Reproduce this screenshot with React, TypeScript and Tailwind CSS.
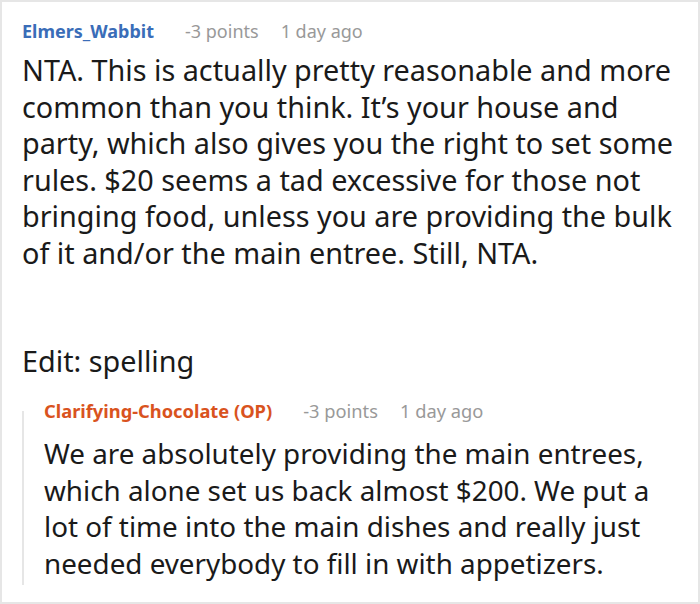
import React from "react";

export default function App() {
  return (
    <div
      className="w-[700px] h-[604px] bg-white border-2 border-[#e6e6e6] overflow-hidden"
      style={{ fontFamily: '"Noto Sans", "Open Sans", sans-serif' }}
    >
      <div className="pl-[20px] pt-[17px]">
        <div className="flex items-center h-[24px] text-[18px] leading-[24px] whitespace-nowrap">
          <span className="font-bold text-[#3a6db8]">Elmers_Wabbit</span>
          <span className="ml-[31px] text-[#999999]">-3 points</span>
          <span className="ml-[22px] text-[#999999]">1 day ago</span>
        </div>
        <div className="text-[28.8px] leading-[36.5px] text-[#1a1a1a] mt-[9px] whitespace-nowrap">
          <p>
            NTA. This is actually pretty reasonable and more
            <br />
            common than you think. It’s your house and
            <br />
            party, which also gives you the right to set some
            <br />
            rules. $20 seems a tad excessive for those not
            <br />
            bringing food, unless you are providing the bulk
            <br />
            of it and/or the main entree. Still, NTA.
          </p>
          <p className="mt-[71.5px]">Edit: spelling</p>
        </div>
        <div className="flex mt-[20px]">
          <div className="w-[2px] bg-[#e6e6e6] mt-[12px]" />
          <div className="pl-[20px] pb-[3px]">
            <div className="flex items-center h-[24px] text-[18.3px] leading-[24px] whitespace-nowrap">
              <span className="font-bold text-[#d9531e]">Clarifying-Chocolate (OP)</span>
              <span className="ml-[31px] text-[#999999]">-3 points</span>
              <span className="ml-[22px] text-[#999999]">1 day ago</span>
            </div>
            <div className="text-[27.8px] leading-[36.7px] text-[#1a1a1a] mt-[12px] whitespace-nowrap">
              We are absolutely providing the main entrees,
              <br />
              which alone set us back almost $200. We put a
              <br />
              lot of time into the main dishes and really just
              <br />
              needed everybody to fill in with appetizers.
            </div>
          </div>
        </div>
      </div>
    </div>
  );
}
